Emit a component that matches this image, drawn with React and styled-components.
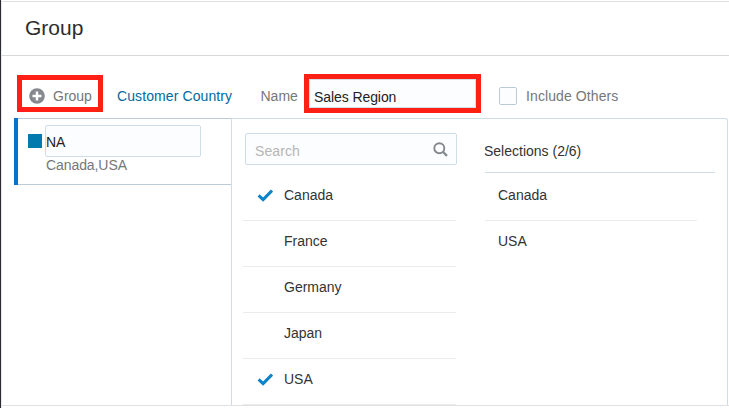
import React from "react";
import styled, { createGlobalStyle } from "styled-components";

const GlobalStyle = createGlobalStyle`
  *, *::before, *::after { box-sizing: border-box; }
  body {
    margin: 0;
    background: #fff;
    overflow: hidden;
    font-family: "Liberation Sans", Arial, sans-serif;
    font-size: 14px;
    line-height: 16px;
    color: #333;
  }
`;

const Window = styled.div`
  display: flex;
  width: 729px;
  height: 408px;
  border-left: 1px solid #2b2d33;
`;

const Dialog = styled.main`
  flex: 1;
  display: flex;
  flex-direction: column;
  min-width: 0;
  margin-top: 1px;
  border-top: 1px solid #dfe1e3;
  border-left: 1px solid #e6e7e9;
`;

const Header = styled.header`
  height: 54px;
  padding: 14px 0 0 23px;
  border-bottom: 1px solid #d6d9dc;
`;

const Title = styled.h1`
  margin: 0;
  font-size: 21px;
  line-height: 24px;
  font-weight: 400;
  color: #2d2d2d;
`;

const Toolbar = styled.div`
  display: flex;
  align-items: flex-start;
  height: 62px;
  padding: 18px 0 0 15px;
  white-space: nowrap;
  color: #757779;
`;

const AddGroup = styled.button`
  display: flex;
  align-items: center;
  gap: 8.5px;
  width: 85.5px;
  height: 37px;
  margin-top: 1px;
  padding: 4px 0 0 6.5px;
  border: 5px solid #ff2015;
  background: #fff;
  font: inherit;
  color: inherit;
`;

const ColumnLink = styled.a`
  width: 143.5px;
  margin: 14px 0 0 14.5px;
  letter-spacing: 0.1px;
  color: #006a9f;
`;

const Label = styled.label`
  width: 43.5px;
  margin-top: 14px;
`;

const NameInput = styled.input`
  width: 177px;
  height: 39px;
  padding: 6px 0 0 5px;
  border: 5px solid #ff2015;
  border-radius: 0;
  outline: none;
  background: #fcfdfe;
  box-shadow: inset 0 0 0 1px #d3dfe6;
  font: inherit;
  letter-spacing: -0.08px;
  color: #222;
`;

const Option = styled.label`
  display: flex;
  align-items: center;
  gap: 9px;
  margin: 13px 0 0 18px;
  letter-spacing: 0.1px;
`;

const CheckBox = styled.span`
  width: 18px;
  height: 18px;
  border: 1px solid #bccbd3;
  border-radius: 2px;
  background: #fcfdfe;
`;

const Body = styled.section`
  display: flex;
  height: 287px;
  width: 714px;
  margin-left: 12px;
  border: solid #cedce6;
  border-width: 1px 1px 0 0;
  border-top-right-radius: 3px;
`;

const GroupList = styled.aside`
  width: 218px;
  margin-top: -1px;
  border-right: 1px solid #d0dbe3;
`;

const GroupItem = styled.div`
  display: flex;
  gap: 4px;
  height: 67px;
  border-left: 4px solid #0572ce;
  padding-left: 10px;
  background:
    linear-gradient(#bccbd6, #bccbd6) top / 100% 1px no-repeat,
    linear-gradient(#bccbd6, #bccbd6) bottom / 100% 1px no-repeat;
`;

const Swatch = styled.span`
  width: 14px;
  height: 14px;
  margin-top: 16px;
  background: #027aae;
`;

const GroupDetails = styled.div`
  margin-left: -1px;
  padding-top: 7px;
`;

const GroupName = styled.input`
  display: block;
  width: 156px;
  height: 32px;
  padding: 2px 0 0;
  border: 1px solid #d0dee7;
  border-radius: 2px;
  outline: none;
  background: #fcfdfe;
  font: inherit;
  color: #222;
`;

const Members = styled.div`
  padding-left: 1px;
  letter-spacing: -0.08px;
  color: #757779;
`;

const Picker = styled.div`
  width: 252px;
  padding: 14px 0 0 11px;
`;

const SearchBox = styled.div`
  display: flex;
  align-items: center;
  justify-content: space-between;
  width: 212px;
  height: 32px;
  margin: 0 0 10px 2px;
  padding: 0 8px 0 9px;
  border: 1px solid #cedce6;
  border-radius: 2px;
  background: #fcfdfe;
`;

const SearchInput = styled.input`
  width: 150px;
  padding: 4px 0 0;
  border: 0;
  outline: none;
  background: transparent;
  font: inherit;
  letter-spacing: 0.1px;
  &::placeholder { color: #b4b6b8; opacity: 1; }
`;

const Rows = styled.ul`
  margin: 0;
  padding: 0;
  list-style: none;
`;

const Row = styled.li`
  display: flex;
  align-items: center;
  width: ${(p) => p.$width}px;
  height: 46px;
  padding: 0 0 5px ${(p) => p.$indent}px;
  border-bottom: 1px solid ${(p) => (p.$last ? "transparent" : "#e9ebec")};
`;

const CheckSlot = styled.span`
  display: flex;
  width: 27px;
`;

const Selections = styled.div`
  width: 230px;
`;

const SelectionsTitle = styled.h2`
  width: 230px;
  height: 54px;
  margin: 0 0 2px 1px;
  padding-top: 24px;
  border-bottom: 1px solid #cedce6;
  font-size: 14px;
  font-weight: 400;
  text-indent: -1px;
`;

const SelectedRows = styled(Rows)`
  margin-left: 1px;
`;

const Footer = styled.footer`
  height: 3px;
  border-top: 1px solid #dfe1e3;
`;

function PlusIcon() {
  return (
    <svg width="16" height="16" viewBox="0 0 16 16" aria-hidden="true">
      <circle cx="8" cy="8" r="7.8" fill="#85898d" />
      <path d="M8 3.5v9M3.5 8h9" stroke="#fff" strokeWidth="2.5" />
    </svg>
  );
}

function SearchIcon() {
  return (
    <svg width="15" height="15" viewBox="0 0 15 15" fill="none" stroke="#84898d" aria-hidden="true">
      <circle cx="6.3" cy="6.2" r="5" strokeWidth="1.9" />
      <path d="M9.8 9.8l4.2 4.1" strokeWidth="2.3" />
    </svg>
  );
}

function CheckIcon() {
  return (
    <svg width="16" height="13" viewBox="0 0 16 13" fill="none" aria-hidden="true">
      <path d="M1.6 6.3L6.1 10.6L15 1.6" stroke="#0c82c9" strokeWidth="3" />
    </svg>
  );
}

const countries = [
  { name: "Canada", checked: true },
  { name: "France", checked: false },
  { name: "Germany", checked: false },
  { name: "Japan", checked: false },
  { name: "USA", checked: true },
];

export default function App() {
  const selected = countries.filter((c) => c.checked);
  return (
    <>
      <GlobalStyle />
      <Window>
        <Dialog>
          <Header>
            <Title>Group</Title>
          </Header>
          <Toolbar>
            <AddGroup>
              <PlusIcon />
              Group
            </AddGroup>
            <ColumnLink>Customer Country</ColumnLink>
            <Label htmlFor="name">Name</Label>
            <NameInput id="name" defaultValue="Sales Region" />
            <Option>
              <CheckBox />
              Include Others
            </Option>
          </Toolbar>
          <Body>
            <GroupList>
              <GroupItem>
                <Swatch />
                <GroupDetails>
                  <GroupName defaultValue="NA" />
                  <Members>Canada,USA</Members>
                </GroupDetails>
              </GroupItem>
            </GroupList>
            <Picker>
              <SearchBox>
                <SearchInput placeholder="Search" />
                <SearchIcon />
              </SearchBox>
              <Rows>
                {countries.map((c) => (
                  <Row key={c.name} $width={213} $indent={14}>
                    <CheckSlot>{c.checked && <CheckIcon />}</CheckSlot>
                    {c.name}
                  </Row>
                ))}
              </Rows>
            </Picker>
            <Selections>
              <SelectionsTitle>Selections (2/6)</SelectionsTitle>
              <SelectedRows>
                {selected.map((c, i) => (
                  <Row key={c.name} $width={212} $indent={13} $last={i === selected.length - 1}>
                    {c.name}
                  </Row>
                ))}
              </SelectedRows>
            </Selections>
          </Body>
          <Footer />
        </Dialog>
      </Window>
    </>
  );
}
